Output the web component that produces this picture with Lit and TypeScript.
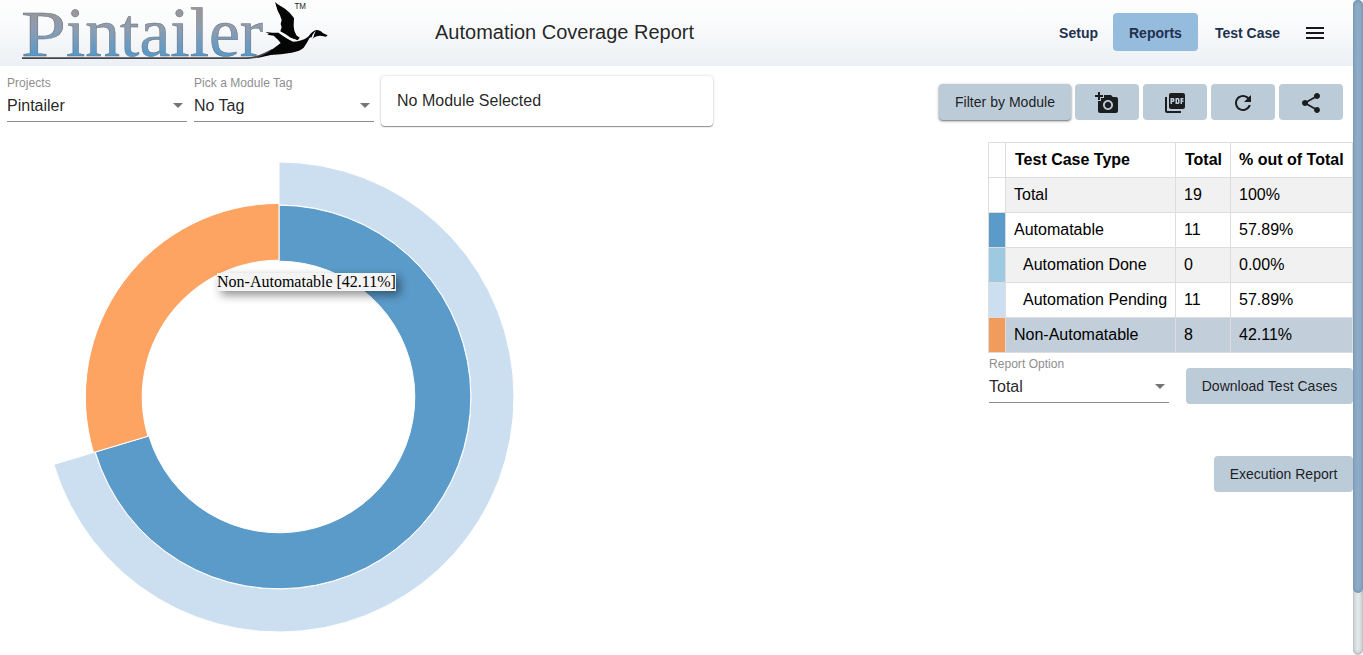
import { LitElement, html, svg, css } from "lit";
import { customElement, property } from "lit/decorators.js";

const base = css`
  :host {
    display: block;
    box-sizing: border-box;
    font-family: "Liberation Sans", Arial, sans-serif;
  }
  * {
    box-sizing: border-box;
  }
`;

const TAU = Math.PI * 2;

function ring(inner: number, outer: number, from: number, to: number): string {
  const at = (r: number, a: number) => `${(r * Math.sin(a)).toFixed(2)},${(-r * Math.cos(a)).toFixed(2)}`;
  const large = to - from > Math.PI ? 1 : 0;
  return `M${at(outer, from)}A${outer},${outer} 0 ${large} 1 ${at(outer, to)}L${at(inner, to)}A${inner},${inner} 0 ${large} 0 ${at(inner, from)}Z`;
}

@customElement("pintailer-logo")
class PintailerLogo extends LitElement {
  static styles = [base, css`
    svg { display: block; overflow: visible; }
    .word { font-family: "Liberation Serif", serif; font-size: 69.5px; }
    .cap { font-size: 65px; }
    .tm { font-size: 8.5px; fill: #222; }
  `];
  render() {
    return html`<svg width="340" height="66" viewBox="0 0 340 66">
      <defs>
        <linearGradient id="ink" gradientUnits="userSpaceOnUse" x1="0" y1="9" x2="0" y2="56">
          <stop offset="0" stop-color="#9c9698" />
          <stop offset="0.45" stop-color="#8a9db3" />
          <stop offset="1" stop-color="#5599cb" />
        </linearGradient>
      </defs>
      <text class="word" x="21" y="55.5" fill="url(#ink)" stroke="#666c74" stroke-width="0.5"><tspan
        class="cap" textLength="45" lengthAdjust="spacingAndGlyphs">P</tspan><tspan
        textLength="197" lengthAdjust="spacingAndGlyphs">intailer</tspan></text>
      <path d="M22 57.3H246Q256 57 264 53L272 49L274 52Q262 58 248 59H22Z" fill="#42464b" />
      <g transform="translate(255 0) scale(0.33333)" fill="#050505">
        <path d="M60 6L67 12L90 26L104 38L117 54L116 78L118 92L124 106L134 113L128 121L108 114L92 103L76 94L80 82L77 72L80 60L75 46L68 32Z" />
        <path d="M31 96L52 98L70 98L84 108L100 118L114 125L128 124Q151 119 161 109Q172 92 184 90Q198 91 203 99L218 106L213 110L196 107Q182 107 172 117L169 110L163 115Q155 132 146 143Q136 153 110 158Q77 163 47 165Q30 169 0 175Q37 163 52 148Q67 137 77 129Q70 119 56 107L37 104L42 101Z" />
        <path d="M76 95L92 105Q108 117 126 121L124 124Q108 123 94 113L78 100Z" fill="#f8fafb" />
        <path d="M169 116Q170 105 178 97L182 93Q176 106 174 116Z" fill="#f7f9fa" />
      </g>
      <text class="tm" x="294.500" y="9.3" textLength="11.500" lengthAdjust="spacingAndGlyphs">TM</text>
    </svg>`;
  }
}

@customElement("app-header")
class AppHeader extends LitElement {
  static styles = [base, css`
    :host {
      display: flex;
      height: 66px;
      background: linear-gradient(#fefefe, #fafbfc 35%, #ecf0f4);
    }
    .title {
      flex: 1;
      padding-left: 95px;
      font-size: 20px;
      line-height: 64px;
      color: rgba(0, 0, 0, 0.87);
      white-space: nowrap;
    }
    nav {
      display: flex;
      align-items: center;
      height: 64px;
      color: #22304f;
      font-size: 14px;
      font-weight: bold;
    }
    .link {
      height: 38px;
      line-height: 40px;
      padding: 0 16px;
      margin-right: 1px;
      border-radius: 4px;
      white-space: nowrap;
    }
    .link:first-child { margin-right: -1px; }
    .active { background: #95bcdd; }
    .menu { display: block; margin: 2px 28px 0 8px; }
  `];
  render() {
    return html`<pintailer-logo></pintailer-logo>
      <div class="title">Automation Coverage Report</div>
      <nav>
        <span class="link">Setup</span>
        <span class="link active">Reports</span>
        <span class="link">Test Case</span>
        <svg class="menu" width="20" height="14" fill="#1b1520">
          <path d="M1 1h18v2H1zM1 6h18v2H1zM1 11h18v2H1z" />
        </svg>
      </nav>`;
  }
}

@customElement("select-field")
class SelectField extends LitElement {
  @property() label = "";
  @property() value = "";
  static styles = [base, css`
    :host { width: 180px; height: 46px; border-bottom: 1px solid #8c8c8c; }
    .label { font-size: 12px; line-height: 14px; letter-spacing: 0.04px; color: #8e8e8e; }
    .row { display: flex; justify-content: space-between; align-items: center; padding-right: 4px; font-size: 16px; line-height: 18px; margin-top: 7px; color: rgba(0, 0, 0, 0.87); }
    .arrow { border: 5px solid transparent; border-top-color: #757575; border-bottom: 0; margin-bottom: 1px; }
  `];
  render() {
    return html`<div class="label">${this.label}</div>
      <div class="row"><span>${this.value}</span><span class="arrow"></span></div>`;
  }
}

@customElement("coverage-chart")
class CoverageChart extends LitElement {
  static styles = [base, css`
    :host { position: relative; width: 570px; height: 520px; }
    svg { display: block; }
    .tip {
      position: absolute;
      left: 217px;
      top: 146px;
      height: 18px;
      width: 179px;
      line-height: 18px;
      background: #f4f4f4;
      box-shadow: 4px 4px 10px rgba(0, 0, 0, 0.45);
      font-family: "Liberation Serif", serif;
      font-size: 16px;
      white-space: nowrap;
      color: #000;
    }
  `];
  render() {
    const split = (19 / 27) * TAU;
    return html`<svg width="570" height="520">
        <g transform="translate(279 270)" stroke="#fff" stroke-width="1">
          ${svg`<path d=${ring(192, 235, 0, split)} fill="#ccdff0" />
          <path d=${ring(135.8, 191.8, 0, split)} fill="#5b9bca" />
          <path d=${ring(136.8, 193.6, split, TAU)} fill="#fda463" />`}
        </g>
      </svg>
      <div class="tip">Non-Automatable [42.11%]</div>`;
  }
}

interface Row {
  color: string;
  name: string;
  total: string;
  share: string;
  kind: string;
}

const ROWS: Row[] = [
  { color: "#ffffff", name: "Total", total: "19", share: "100%", kind: "even" },
  { color: "#5b9bca", name: "Automatable", total: "11", share: "57.89%", kind: "" },
  { color: "#9ecae1", name: "Automation Done", total: "0", share: "0.00%", kind: "even sub" },
  { color: "#ccdff0", name: "Automation Pending", total: "11", share: "57.89%", kind: "sub" },
  { color: "#f19b5c", name: "Non-Automatable", total: "8", share: "42.11%", kind: "picked" },
];

@customElement("coverage-table")
class CoverageTable extends LitElement {
  static styles = [base, css`
    table { border-collapse: collapse; table-layout: fixed; width: 365px; font-size: 16px; color: #000; }
    th, td { border: 1px solid #dddddd; height: 35px; padding: 0 0 0 8px; text-align: left; white-space: nowrap; }
    th { padding-left: 9px; }
    th.share { padding-left: 8px; }
    .key { width: 17px; padding: 0; }
    .name { width: 170px; }
    .num { width: 55px; }
    .even td { background: #f1f1f1; }
    .picked td { background: #c2ced9; }
    .sub .name { padding-left: 17px; }
  `];
  render() {
    return html`<table>
      <tr><th class="key"></th><th class="name">Test Case Type</th><th class="num">Total</th><th class="share">% out of Total</th></tr>
      ${ROWS.map((r) => html`<tr class=${r.kind}>
        <td class="key" style="background:${r.color}"></td>
        <td class="name">${r.name}</td><td class="num">${r.total}</td><td class="share">${r.share}</td>
      </tr>`)}
    </table>`;
  }
}

@customElement("app-root")
class AppRoot extends LitElement {
  static styles = [base, css`
    :host { display: flex; width: 1363px; height: 655px; overflow: hidden; background: #fff; }
    .page { width: 1353px; }
    .bar {
      width: 10px;
      background: #e2e7ea;
      border-radius: 5px;
      box-shadow: inset 0 0 4px rgba(0, 0, 0, 0.35);
    }
    .thumb {
      height: 593px;
      border-radius: 5px;
      background: #8eadc7;
      box-shadow: inset 0 0 4px rgba(60, 80, 110, 0.45);
    }
    .tools { display: flex; height: 61px; padding: 10px 10px 0 7px; }
    .gap { margin-right: 7px; }
    .chosen {
      width: 332px;
      height: 50px;
      padding-left: 16px;
      line-height: 49px;
      font-size: 16px;
      color: rgba(0, 0, 0, 0.87);
      border-radius: 4px;
      box-shadow: 0 1px 1px rgba(0, 0, 0, 0.4), 0 0 3px rgba(0, 0, 0, 0.18);
    }
    .actions { display: flex; gap: 4px; margin: 8px 0 0 auto; }
    .button {
      display: flex;
      align-items: center;
      justify-content: center;
      height: 36px;
      width: 64px;
      border-radius: 4px;
      background: #bccbd8;
      color: rgba(0, 0, 0, 0.87);
      font-size: 14px;
      letter-spacing: 0.02px;
      white-space: nowrap;
    }
    .button svg { display: block; fill: #1b1d1f; margin-top: 2px; }
    .filter { width: 132px; box-shadow: 0 1px 2px rgba(0, 0, 0, 0.5), 0 1px 4px rgba(0, 0, 0, 0.15); }
    .content { display: flex; justify-content: space-between; }
    .side { width: 365px; padding-top: 15px; }
    .option { display: flex; justify-content: space-between; padding: 3px 0 0 1px; margin-top: 1px; }
    .download { width: 167px; margin-top: 11px; }
    .run { width: 139px; margin: 52px 0 0 auto; }
  `];
  render() {
    return html`
      <div class="page">
        <app-header></app-header>
        <div class="tools">
          <select-field class="gap" label="Projects" value="Pintailer"></select-field>
          <select-field class="gap" label="Pick a Module Tag" value="No Tag"></select-field>
          <div class="chosen">No Module Selected</div>
          <div class="actions">
            <div class="button filter">Filter by Module</div>
            <div class="button"><svg width="24" height="24" viewBox="0 0 24 24"><path d="M3 4V1h2v3h3v2H5v3H3V6H0V4h3zm3 6V7h3V4h7l1.83 2H21c1.1 0 2 .9 2 2v12c0 1.1-.9 2-2 2H5c-1.1 0-2-.9-2-2V10h3zm7 9c2.76 0 5-2.24 5-5s-2.24-5-5-5-5 2.24-5 5 2.24 5 5 5zm-3.2-5c0 1.77 1.43 3.2 3.2 3.2s3.2-1.43 3.2-3.2-1.43-3.2-3.2-3.2-3.2 1.43-3.2 3.2z" /></svg></div>
            <div class="button"><svg width="24" height="24" viewBox="0 0 24 24"><path d="M20 2H8c-1.1 0-2 .9-2 2v12c0 1.1.9 2 2 2h12c1.1 0 2-.9 2-2V4c0-1.1-.9-2-2-2zm-8.500 7.500c0 .83-.67 1.500-1.500 1.500H9v2H7.500V7H10c.83 0 1.500.67 1.500 1.500v1zm5 2c0 .83-.67 1.500-1.500 1.500h-2.500V7H15c.83 0 1.500.67 1.500 1.500v3zm4-3H19v1h1.500V11H19v2h-1.500V7h3v1.500zM9 9.500h1v-1H9v1zM4 6H2v14c0 1.100.9 2 2 2h14v-2H4V6zm10 5.500h1v-3h-1v3z" /></svg></div>
            <div class="button"><svg width="24" height="24" viewBox="0 0 24 24"><path d="M17.650 6.350C16.200 4.900 14.210 4 12 4c-4.420 0-7.990 3.580-7.990 8s3.570 8 7.990 8c3.730 0 6.840-2.550 7.730-6h-2.080c-.82 2.330-3.040 4-5.650 4-3.310 0-6-2.690-6-6s2.690-6 6-6c1.660 0 3.140.69 4.220 1.780L13 11h7V4l-2.350 2.350z" /></svg></div>
            <div class="button"><svg width="24" height="24" viewBox="0 0 24 24"><path d="M18 16.080c-.76 0-1.440.3-1.960.77L8.910 12.700c.05-.23.09-.46.09-.7s-.04-.47-.09-.7l7.050-4.110c.54.5 1.250.81 2.040.81 1.660 0 3-1.340 3-3s-1.340-3-3-3-3 1.340-3 3c0 .24.04.47.09.7L8.040 9.810C7.500 9.310 6.790 9 6 9c-1.660 0-3 1.340-3 3s1.340 3 3 3c.79 0 1.500-.31 2.040-.81l7.120 4.160c-.05.21-.08.43-.08.65 0 1.610 1.310 2.920 2.920 2.920s2.920-1.310 2.920-2.920-1.310-2.920-2.920-2.920z" /></svg></div>
          </div>
        </div>
        <div class="content">
          <coverage-chart></coverage-chart>
          <div class="side">
            <coverage-table></coverage-table>
            <div class="option">
              <select-field label="Report Option" value="Total"></select-field>
              <div class="button download">Download Test Cases</div>
            </div>
            <div class="button run">Execution Report</div>
          </div>
        </div>
      </div>
      <div class="bar"><div class="thumb"></div></div>
    `;
  }
}
